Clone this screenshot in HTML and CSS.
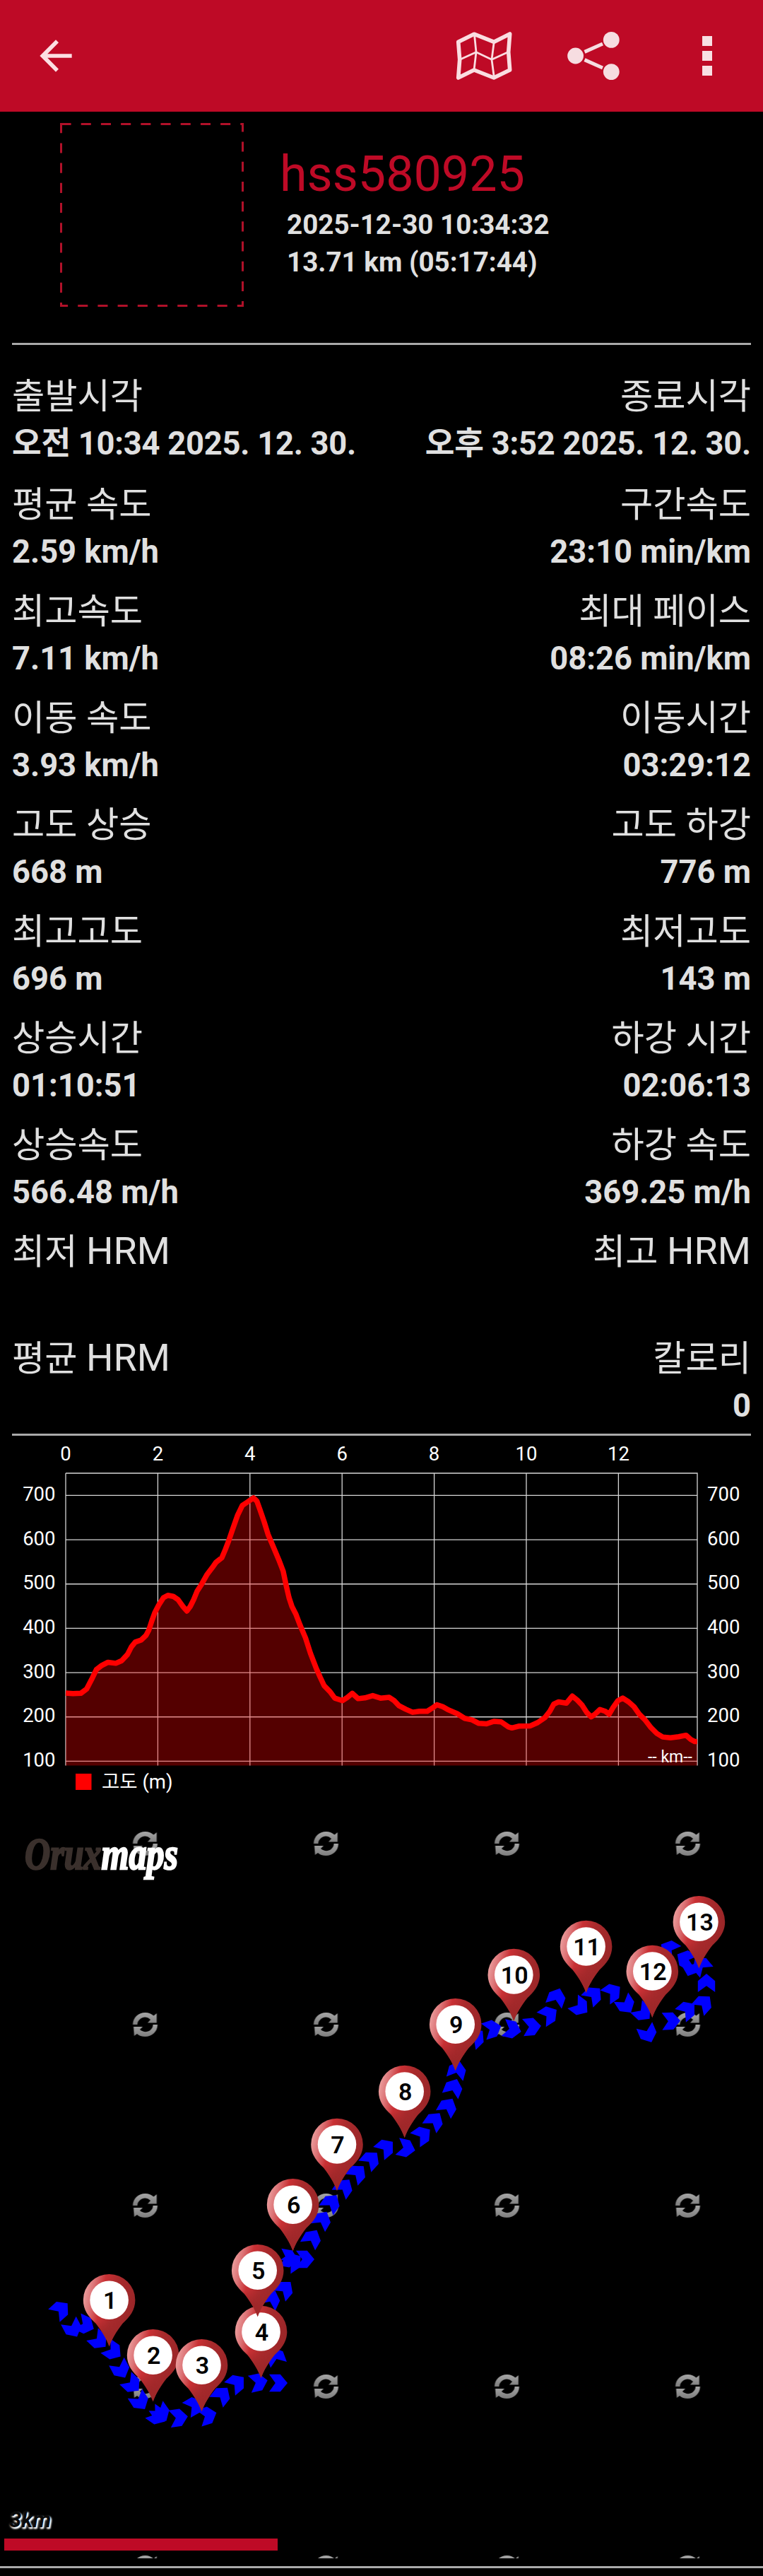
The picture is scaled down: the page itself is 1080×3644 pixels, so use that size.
FILE: index.html
```html
<!DOCTYPE html>
<html lang="ko">
<head>
    <meta charset="UTF-8">
    <meta name="viewport" content="width=device-width, initial-scale=1.0">
    <title>OruxMaps - hss580925</title>
    <link rel="stylesheet" href="styles.css">
</head>
<body>

    <div class="toolbar">
        <svg class="icon-back" viewBox="0 0 24 24"><path d="M20 11H7.83l5.59-5.59L12 4l-8 8 8 8 1.41-1.41L7.83 13H20v-2z"/></svg>
        <div class="actions">
            <svg class="icon-map" viewBox="0 0 81 70">
                <path class="outer" d="M3.7 15.2L26 4.2L54.3 15.3L76.7 4L74.7 29.7L76.7 55L54 66L26 55L3.7 66L5.7 40.3Z"/>
                <path class="inner" d="M26.5 5L29 29.7L26 55M54.3 15L51 40.3L54.3 65M6 40.3L29 29.7L51 40.3L74 29.7"/>
            </svg>
            <svg class="icon-share" viewBox="0 0 74 68">
                <circle cx="11.6" cy="34" r="11.4"/>
                <circle cx="62.3" cy="11.4" r="11.4"/>
                <circle cx="62.3" cy="56.6" r="11.4"/>
                <path d="M24.5 28.4L50 17M24.5 39.6L50 51"/>
            </svg>
            <div class="dots"><i></i><i></i><i></i></div>
        </div>
    </div>

    <div class="summary">
        <svg class="thumb" viewBox="0 0 260 260">
            <rect x="1.5" y="1.5" width="257" height="257"/>
        </svg>
        <div class="summary-text">
            <h1>hss580925</h1>
            <p>2025-12-30 10:34:32</p>
            <p>13.71 km (05:17:44)</p>
        </div>
    </div>

    <div class="stats">
        <div class="row dates"><div><label>출발시각</label><b>오전 10:34 2025. 12. 30.</b></div><div><label>종료시각</label><b>오후 3:52 2025. 12. 30.</b></div></div>
        <div class="row"><div><label>평균 속도</label><b>2.59 km/h</b></div><div><label>구간속도</label><b>23:10 min/km</b></div></div>
        <div class="row"><div><label>최고속도</label><b>7.11 km/h</b></div><div><label>최대 페이스</label><b>08:26 min/km</b></div></div>
        <div class="row"><div><label>이동 속도</label><b>3.93 km/h</b></div><div><label>이동시간</label><b>03:29:12</b></div></div>
        <div class="row"><div><label>고도 상승</label><b>668 m</b></div><div><label>고도 하강</label><b>776 m</b></div></div>
        <div class="row"><div><label>최고고도</label><b>696 m</b></div><div><label>최저고도</label><b>143 m</b></div></div>
        <div class="row"><div><label>상승시간</label><b>01:10:51</b></div><div><label>하강 시간</label><b>02:06:13</b></div></div>
        <div class="row"><div><label>상승속도</label><b>566.48 m/h</b></div><div><label>하강 속도</label><b>369.25 m/h</b></div></div>
        <div class="row"><div><label>최저 <span>HRM</span></label></div><div><label>최고 <span>HRM</span></label></div></div>
        <div class="row"><div><label>평균 <span>HRM</span></label></div><div><label>칼로리</label><b>0</b></div></div>
    </div>

    <svg class="chart" viewBox="0 0 1080 524">
        <g class="grid" id="grid"></g>
        <g transform="translate(0 -21) scale(.6887 .35714)">
            <path class="area" id="area"/>
            <path class="line" id="line"/>
        </g>
        <g class="axis" id="axis"></g>
        <text class="unit" x="917" y="462">-- km--</text>
        <rect class="legend-box" x="107" y="478" width="22.5" height="23"/>
        <text class="legend" x="144" y="498.5">고도 (m)</text>
    </svg>

    <!-- map: origin is at y 2555 of the page -->
    <svg class="map" viewBox="0 2555 1080 1064">
        <defs>
            <linearGradient id="pinRed" gradientUnits="userSpaceOnUse" x1="-36" y1="-4" x2="34" y2="10">
                <stop offset="0" stop-color="#ea9a9a"/>
                <stop offset="0.15" stop-color="#dc7376"/>
                <stop offset="0.35" stop-color="#c93034"/>
                <stop offset="0.62" stop-color="#a82a2c"/>
                <stop offset="1" stop-color="#9b2628"/>
            </linearGradient>
            <linearGradient id="pinTip" gradientUnits="userSpaceOnUse" x1="0" y1="28" x2="0" y2="50">
                <stop offset="0" stop-color="#9f2729" stop-opacity="0"/>
                <stop offset="1" stop-color="#9f2729"/>
            </linearGradient>
            <linearGradient id="grey" x1="0" y1="0" x2="0" y2="1">
                <stop offset="0" stop-color="#a6a6a6"/>
                <stop offset="1" stop-color="#7c7c7c"/>
            </linearGradient>
            <pattern id="tiles" x="77.5" y="2480" width="256" height="256" patternUnits="userSpaceOnUse">
                <g transform="translate(128 128)">
                    <path fill="url(#grey)" d="M-17.5 0C-17.5 -10 -9.5 -17 0 -17C5 -17 9 -15 12 -12.500L16.300 -16V-2.500H3.500L7.500 -7C3 -11.500 -3 -11.500 -7 -8C-10 -5.500 -11 -3 -11 0Z"/>
                    <path fill="url(#grey)" d="M17.500 0C17.500 10 9.500 17 0 17C-5 17 -9 15.500 -11.500 13L-15.500 16L-16.500 3H-3.500L-7.500 7C-3 11 3 11 7 8C10 5.500 11 3 11 0Z"/>
                </g>
            </pattern>
            <path id="arrow" d="M0 -13L12.200 -2.800V13L0 4.200L-12.200 13V-2.800Z"/>
            <path id="pinShape" d="M0 65.500C-4 54 -11 43 -19 33C-29 24 -36.800 14 -36.800 0A36.800 36.800 0 0 1 36.800 0C36.800 14 29 24 19 33C11 43 4 54 0 65.500Z"/>
            <g id="pin">
                <use href="#pinShape" fill="url(#pinRed)"/>
                <use href="#pinShape" fill="url(#pinTip)"/>
                <circle r="27.300" fill="#fff"/>
            </g>
        </defs>
        <rect y="2555" width="1080" height="1064" fill="url(#tiles)"/>
        <g id="track" fill="#0000fe"></g>
        <g class="pins" id="pins"></g>
        <text class="logo" x="35" y="2643.500" textLength="217" lengthAdjust="spacingAndGlyphs">Orux<tspan>maps</tspan></text>
        <text class="scale-text" x="13" y="3575">3km</text>
        <rect class="scale-bar" x="6" y="3591" width="387" height="17"/>
    </svg>

    <script>
        const svgNS = 'http://www.w3.org/2000/svg';

        function add(parent, tag, attrs, text) {
            const el = document.createElementNS(svgNS, tag);
            for (const key in attrs) el.setAttribute(key, attrs[key]);
            if (text !== undefined) el.textContent = text;
            document.getElementById(parent).appendChild(el);
        }

        // Chart grid and axis labels
        for (let i = 0; i < 7; i++) {
            const x = 93 + i * 130.4;
            const y = 84.4 + i * 62.67;
            add('grid', 'path', { d: `M${x} 53V466.500` });
            add('grid', 'path', { d: `M93 ${y}H987` });
            add('axis', 'text', { x: x, y: 34.7, 'text-anchor': 'middle' }, i * 2);
            add('axis', 'text', { x: 78.5, y: y + 7.5, 'text-anchor': 'end' }, 700 - i * 100);
            add('axis', 'text', { x: 1001, y: y + 7.5 }, 700 - i * 100);
        }
        add('grid', 'path', { d: 'M93 53H987V466.500' });

        // Elevation profile
        const profile = '135,1078 150,1080 166,1079 178,1062 188,1025 198,985 208,970 222,956 238,960 250,950 262,925 270,895 278,876 290,868 300,850 306,828 312,792 318,760 326,730 336,700 345,691 356,695 366,708 376,735 384,753 391,735 398,708 405,675 414,648 425,610 436,582 444,560 456,542 463,510 470,475 478,430 488,375 498,335 508,322 521,305 528,318 534,350 543,400 551,450 562,500 573,550 582,595 588,650 594,700 600,735 608,765 617,810 628,860 638,920 650,980 658,1015 666,1048 678,1072 688,1098 704,1108 714,1095 724,1079 736,1100 750,1097 766,1088 782,1098 800,1095 810,1108 820,1128 834,1142 848,1154 862,1150 878,1150 888,1138 898,1124 910,1132 922,1145 940,1160 955,1178 970,1184 984,1198 1000,1200 1015,1190 1030,1192 1045,1212 1052,1216 1066,1209 1090,1208 1105,1195 1120,1175 1130,1150 1138,1122 1148,1113 1164,1118 1176,1090 1186,1105 1196,1125 1206,1155 1215,1172 1222,1163 1233,1143 1244,1150 1252,1162 1260,1135 1270,1108 1280,1098 1292,1113 1303,1132 1314,1162 1326,1185 1338,1215 1350,1238 1362,1252 1378,1255 1395,1251 1410,1245 1420,1262 1428,1270 1433,1270';
        document.getElementById('line').setAttribute('d', 'M' + profile);
        document.getElementById('area').setAttribute('d', 'M' + profile + 'V1365H135Z');

        // Track arrows: x, y, heading
        const track = [
            [86, 3267, 48], [103, 3294, 152], [121, 3289, 115], [140, 3311, 133], [160, 3326, 125],
            [171, 3352, 152], [187, 3373, 133], [198, 3397, 147], [223, 3418, 125], [228, 3414, 145],
            [253, 3420, 82], [275, 3403, 60], [294, 3417, 72], [314, 3388, 38], [335, 3371, 50],
            [366, 3370, 78], [394, 3371, 90], [390, 3333, -20], [384, 3252, 25], [403, 3238, 40],
            [409, 3195, 100], [415, 3199, 55], [432, 3196, 90], [442, 3166, 30], [456, 3140, 30],
            [469, 3116, 35], [487, 3094, 35], [506, 3074, 42], [525, 3055, 42], [546, 3038, 50],
            [575, 3039, 103], [598, 3020, 55], [615, 3000, 35], [634, 2980, 30], [642, 2953, 22],
            [647, 2928, 15], [674, 2882, 45], [697, 2870, 72], [725, 2871, 103], [753, 2867, 85],
            [777, 2850, 57], [788, 2825, 20], [821, 2839, 127], [840, 2822, 45], [867, 2818, 55],
            [886, 2836, 147], [910, 2847, 133], [917, 2877, 157], [950, 2859, 88], [973, 2843, 50],
            [996, 2834, 42], [1000, 2805, 0], [947, 2757, -60], [970, 2771, -60], [978, 2783, -160],
            [992, 2780, -40]
        ];
        track.forEach(([x, y, heading]) => {
            add('track', 'use', { href: '#arrow', transform: `translate(${x} ${y}) rotate(${heading})` });
        });

        // Kilometre pins
        const pins = [
            [154.6, 3253.7], [216.6, 3331.7], [285.5, 3345.7], [369.5, 3298.5], [364.7, 3211.7],
            [414.6, 3118.7], [477, 3033.5], [572.7, 2958.5], [644.7, 2863.7], [727.3, 2793.5],
            [829.6, 2753.5], [923.3, 2788.5], [989.4, 2718.7]
        ];
        pins.forEach(([x, y], i) => {
            add('pins', 'use', { href: '#pin', x: x, y: y });
            add('pins', 'text', { x: x + 1, y: y + 12 }, i + 1);
        });
    </script>

</body>
</html>
```
FILE: styles.css
```css
* {
    box-sizing: border-box;
}

body {
    margin: 0;
    background-color: #000;
    color: #e0e0e0;
    font-family: Roboto, "Noto Sans CJK KR", sans-serif;
}

svg {
    display: block;
}

.toolbar {
    height: 158px;
    padding: 0 72px 0 45px;
    background-color: #be0a26;
    display: flex;
    justify-content: space-between;
    align-items: center;
}

.icon-back {
    width: 68px;
    height: 68px;
    fill: #fcdfe3;
}

.actions {
    display: flex;
    align-items: center;
}

.icon-map {
    width: 81px;
    height: 70px;
    margin-right: 77px;
    fill: none;
    stroke: #fadde1;
}

.icon-map .outer {
    stroke-width: 5.6;
    stroke-linejoin: round;
}

.icon-map .inner {
    stroke-width: 2.8;
}

.icon-share {
    width: 74px;
    height: 68px;
    margin-right: 117px;
    fill: #f6dde1;
    stroke: none;
}

.icon-share path {
    stroke: #f6dde1;
    stroke-width: 5;
}

.dots {
    display: flex;
    flex-direction: column;
    gap: 7px;
}

.dots i {
    width: 14px;
    height: 14px;
    background-color: #f8dfe3;
}

.summary {
    display: flex;
    height: 330px;
    margin: 0 17px;
    padding: 16px 0 0 68px;
    border-bottom: 3px solid #a9a9a9;
}

.thumb {
    width: 260px;
    height: 260px;
    fill: none;
    stroke: #b01129;
    stroke-width: 3;
    stroke-dasharray: 14.1 14.1;
}

.summary-text {
    padding: 31px 0 0 51px;
}

.summary-text h1 {
    margin: 0 0 4px;
    color: #be0a26;
    font-size: 70px;
    font-weight: 400;
    line-height: 82px;
}

.summary-text p {
    margin: 0 0 0 10px;
    font-size: 38.6px;
    font-weight: 700;
    line-height: 53px;
}

.stats {
    display: grid;
    grid-template-rows: 136px;
    grid-auto-rows: 134px;
    gap: 17px;
    margin: 0 17px;
    padding: 32px 0 13px;
    border-bottom: 3px solid #a9a9a9;
}

.row {
    display: flex;
    justify-content: space-between;
}

.row div:last-child {
    text-align: right;
}

.row label {
    display: block;
    font-size: 50.3px;
    line-height: 82px;
}

.row label span {
    font-size: 54px;
    line-height: 1;
}

.row b {
    display: block;
    font-size: 45.3px;
    font-weight: 700;
    line-height: 52px;
}

.row.dates b {
    letter-spacing: -0.25px;
}

.chart {
    width: 1080px;
    height: 524px;
}

.chart text {
    fill: #fff;
    font-size: 27.5px;
}

.chart .unit {
    font-size: 23px;
}

.grid {
    fill: none;
    stroke: #d6d6d6;
    stroke-width: 1.3;
}

.area {
    fill: rgba(255, 0, 0, 0.33);
}

.line {
    fill: none;
    stroke: #f00;
    stroke-width: 7.5;
    stroke-linejoin: round;
    vector-effect: non-scaling-stroke;
}

.legend-box {
    fill: #f00;
}

.map {
    width: 1080px;
    height: 1064px;
}

.pins text {
    fill: #000;
    font-size: 34px;
    font-weight: 600;
    text-anchor: middle;
}

.logo {
    font-family: "Liberation Serif", serif;
    font-size: 63px;
    font-style: italic;
    font-weight: bold;
    fill: #3a302c;
    stroke: #3a302c;
    stroke-width: 2.5;
}

.logo tspan {
    fill: #fff;
    stroke: #fff;
}

.scale-text {
    fill: #0a0a0a;
    font-size: 31px;
    font-style: italic;
    font-weight: bold;
    text-shadow: 2px 2px 2px #fff, 1px 2px 3px #ddd;
}

.scale-bar {
    fill: #be0a26;
}

/* separator under the map */
body::after {
    content: "";
    display: block;
    height: 3px;
    margin: 11px 0;
    background-color: #a9a9a9;
}
```
